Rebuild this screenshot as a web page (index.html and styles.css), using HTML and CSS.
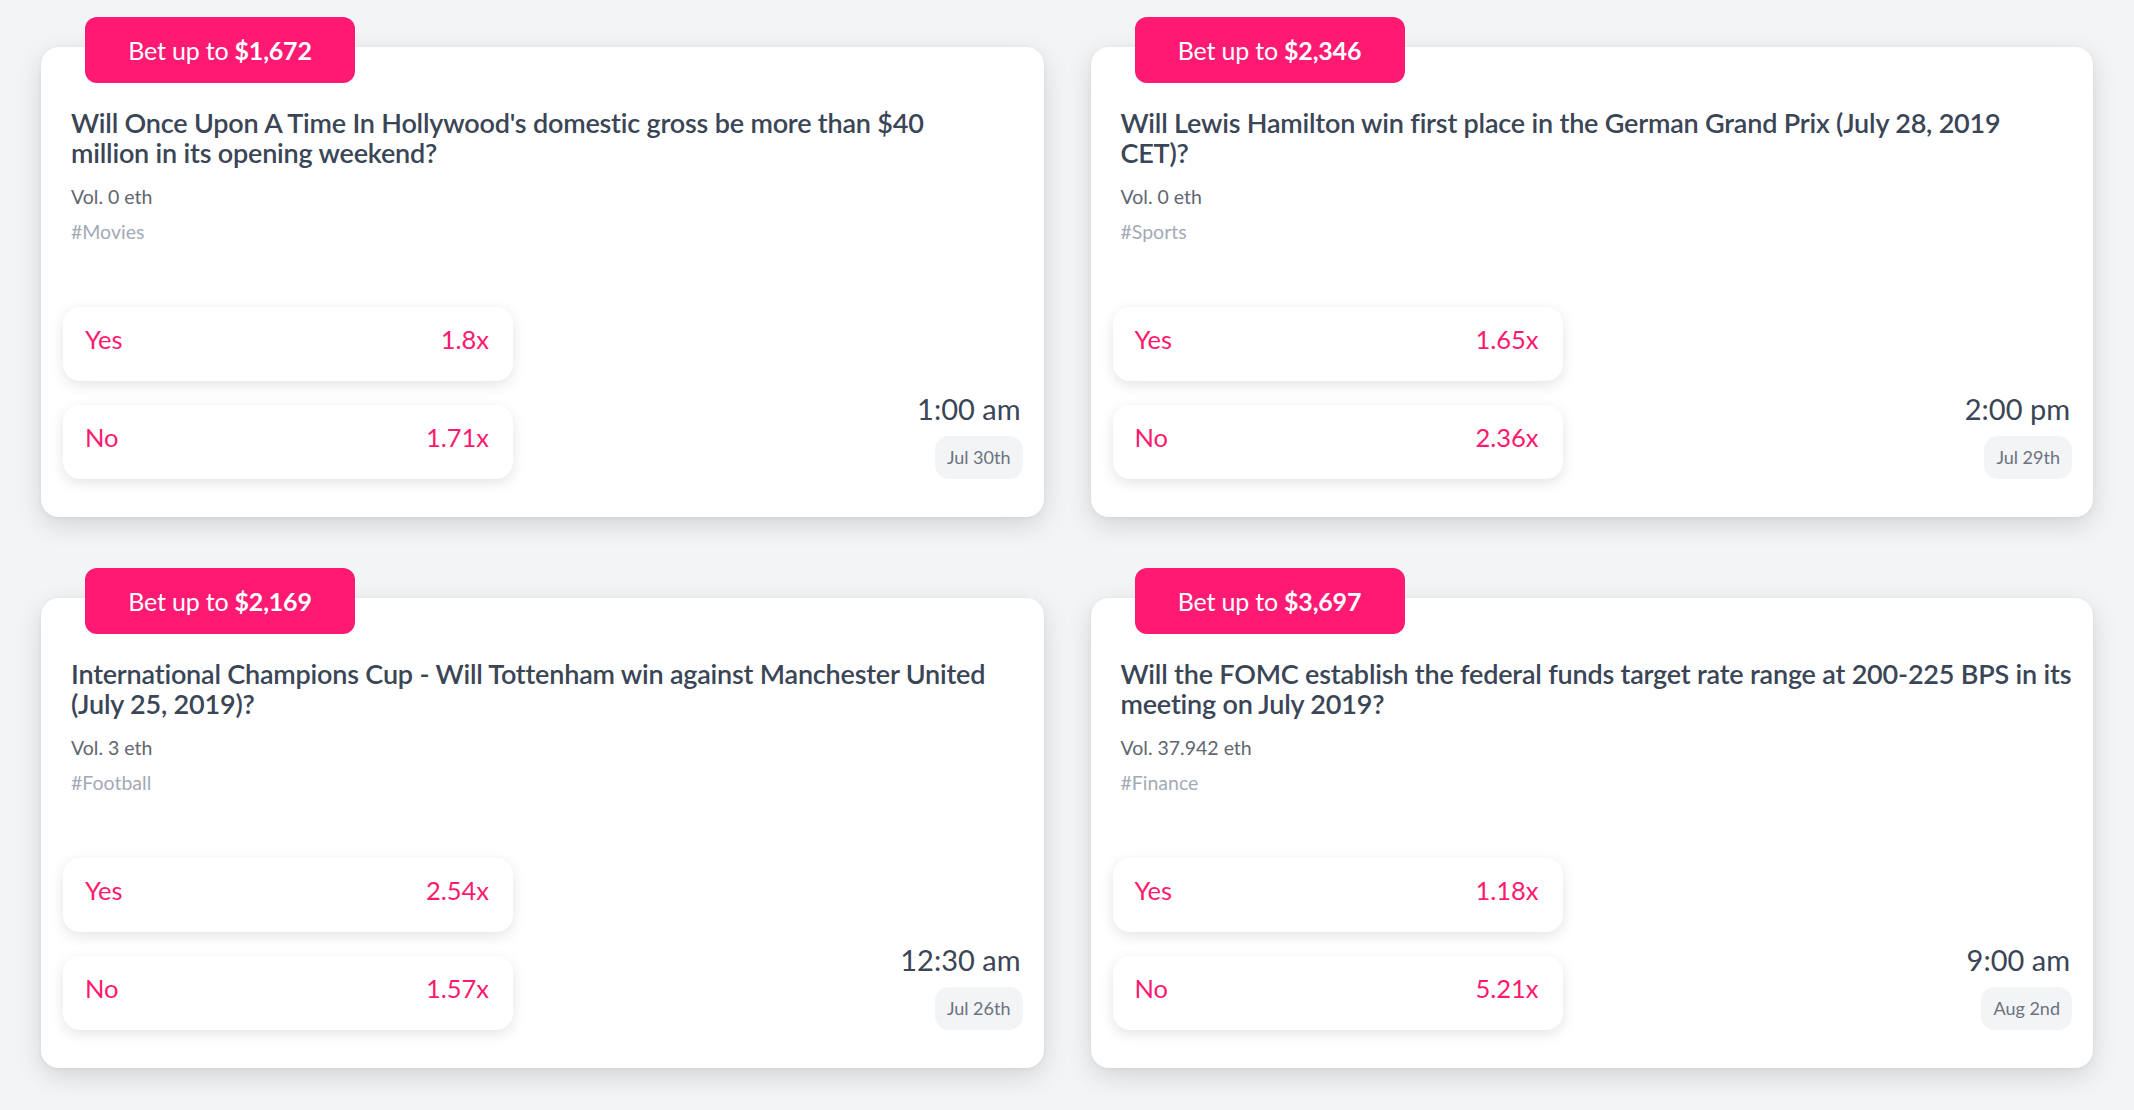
FILE: index.html
```html
<!DOCTYPE html>
<html lang="en">
<head>
<meta charset="utf-8">
<title>Markets</title>
<link rel="stylesheet" href="styles.css">
</head>
<body>
<main class="grid">
  <article class="card">
    <div class="badge">Bet up to <b>$1,672</b></div>
    <div class="info">
      <h2 class="title">Will Once Upon A Time In Hollywood's domestic gross be more than $40<br>million in its opening weekend?</h2>
      <div class="vol">Vol. 0 eth</div>
      <div class="tag">#Movies</div>
    </div>
    <div class="bottom">
      <div class="options">
        <div class="opt"><span>Yes</span><span>1.8x</span></div>
        <div class="opt"><span>No</span><span>1.71x</span></div>
      </div>
      <div class="when">
        <div class="time">1:00 am</div>
        <div class="date">Jul 30th</div>
      </div>
    </div>
  </article>

  <article class="card">
    <div class="badge">Bet up to <b>$2,346</b></div>
    <div class="info">
      <h2 class="title">Will Lewis Hamilton win first place in the German Grand Prix (July 28, 2019<br>CET)?</h2>
      <div class="vol">Vol. 0 eth</div>
      <div class="tag">#Sports</div>
    </div>
    <div class="bottom">
      <div class="options">
        <div class="opt"><span>Yes</span><span>1.65x</span></div>
        <div class="opt"><span>No</span><span>2.36x</span></div>
      </div>
      <div class="when">
        <div class="time">2:00 pm</div>
        <div class="date">Jul 29th</div>
      </div>
    </div>
  </article>

  <article class="card">
    <div class="badge">Bet up to <b>$2,169</b></div>
    <div class="info">
      <h2 class="title">International Champions Cup - Will Tottenham win against Manchester United (July 25, 2019)?</h2>
      <div class="vol">Vol. 3 eth</div>
      <div class="tag">#Football</div>
    </div>
    <div class="bottom">
      <div class="options">
        <div class="opt"><span>Yes</span><span>2.54x</span></div>
        <div class="opt"><span>No</span><span>1.57x</span></div>
      </div>
      <div class="when">
        <div class="time">12:30 am</div>
        <div class="date">Jul 26th</div>
      </div>
    </div>
  </article>

  <article class="card">
    <div class="badge">Bet up to <b>$3,697</b></div>
    <div class="info">
      <h2 class="title">Will the FOMC establish the federal funds target rate range at 200-225 BPS in its meeting on July 2019?</h2>
      <div class="vol">Vol. 37.942 eth</div>
      <div class="tag">#Finance</div>
    </div>
    <div class="bottom">
      <div class="options">
        <div class="opt"><span>Yes</span><span>1.18x</span></div>
        <div class="opt"><span>No</span><span>5.21x</span></div>
      </div>
      <div class="when">
        <div class="time">9:00 am</div>
        <div class="date">Aug 2nd</div>
      </div>
    </div>
  </article>
</main>
</body>
</html>
```

FILE: styles.css
```css
* { box-sizing: border-box; }

html, body {
  margin: 0;
  padding: 0;
  background: #f3f4f6;
  font-family: Lato, "Open Sans", "Liberation Sans", sans-serif;
}

.grid {
  display: grid;
  grid-template-columns: 1fr 1fr;
  column-gap: 47px;
  row-gap: 81px;
  padding: 47px 41px 40px 41px;
}

.card {
  position: relative;
  height: 470px;
  background: #ffffff;
  border-radius: 18px;
  box-shadow: 0 8px 26px rgba(0, 0, 0, 0.13), 0 1px 4px rgba(0, 0, 0, 0.05);
  padding: 61px 21px 38px 22px;
  display: flex;
  flex-direction: column;
}

.badge {
  position: absolute;
  top: -30px;
  left: 44px;
  width: 270px;
  height: 66px;
  background: #fe1a73;
  color: #ffffff;
  border-radius: 12px;
  font-size: 25px;
  line-height: 66px;
  text-align: center;
  letter-spacing: -0.2px;
}

.badge b { font-weight: 700; }

.info {
  padding-left: 8px;
  margin-right: -6px;
}

.title {
  margin: 0;
  font-size: 27px;
  line-height: 30px;
  font-weight: 600;
  color: #3a4556;
  letter-spacing: -0.2px;
}

.vol {
  margin-top: 16px;
  font-size: 19.5px;
  line-height: 26px;
  color: #5f6670;
}

.tag {
  margin-top: 9px;
  font-size: 19.5px;
  line-height: 26px;
  color: #a3aab5;
}

.bottom {
  margin-top: auto;
  display: flex;
  justify-content: space-between;
  align-items: flex-end;
}

.options {
  width: 450px;
  display: flex;
  flex-direction: column;
  gap: 24px;
}

.opt {
  height: 74px;
  border-radius: 17px;
  background: #ffffff;
  box-shadow: 0 4px 14px rgba(0, 0, 0, 0.11);
  padding: 12px 24px 0 22px;
  display: flex;
  justify-content: space-between;
  align-items: flex-start;
  color: #fe1a6f;
  font-size: 25.5px;
  line-height: 40px;
}

.when {
  display: flex;
  flex-direction: column;
  align-items: flex-end;
}

.time {
  margin-right: 2px;
  font-size: 29px;
  line-height: 34px;
  color: #3a4556;
}

.date {
  margin-top: 10px;
  height: 43px;
  padding: 0 12px;
  border-radius: 14px;
  background: #f3f4f6;
  color: #6b7280;
  font-size: 18px;
  line-height: 43px;
}
```
